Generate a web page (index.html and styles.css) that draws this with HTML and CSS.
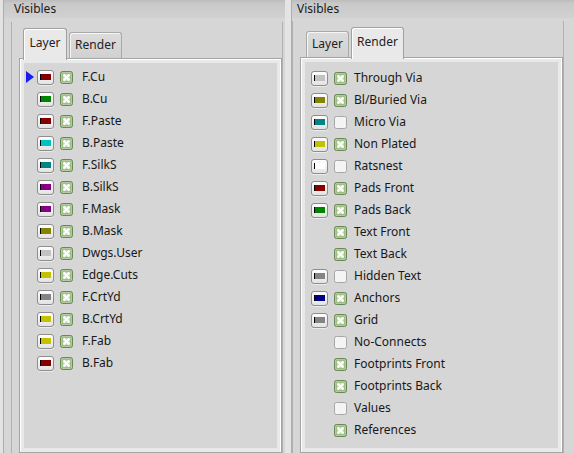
FILE: index.html
```html
<!DOCTYPE html>
<html lang="en">
<head>
<meta charset="utf-8">
<title>Visibles</title>
<link rel="stylesheet" href="styles.css">
</head>
<body>
<svg class="defs" xmlns="http://www.w3.org/2000/svg" aria-hidden="true">
  <symbol id="cb-on" viewBox="0 0 13 13">
    <rect x="0.5" y="0.5" width="12" height="12" rx="2" fill="#9ebd85" stroke="#6a8859"/>
    <rect x="1.5" y="1.5" width="10" height="10" rx="1.5" fill="none" stroke="#b2cb9d" stroke-width="1"/>
    <rect x="3" y="3" width="7" height="7" rx="1" fill="#c9d9bd"/>
    <path d="M4.2 4.2l4.6 4.6M8.8 4.2l-4.6 4.6" stroke="#ffffff" stroke-width="2" stroke-linecap="square"/>
  </symbol>
  <symbol id="cb-off" viewBox="0 0 13 13">
    <rect x="0.5" y="0.5" width="12" height="12" rx="2" fill="#f4f4f4" stroke="#a7a7a7"/>
  </symbol>
</svg>
<div class="screen">
  <div class="edge"></div>

  <section class="panel panel-left">
    <div class="header">Visibles</div>
    <div class="frame">
      <div class="tabbar">
        <div class="tab t-layer active">Layer</div>
        <div class="tab t-render">Render</div>
      </div>
      <div class="pane">
        <div class="pane-inner">
          <div class="row"><span class="marker"><svg width="8" height="12" viewBox="0 0 8 12"><polygon points="0,0 8,6 0,12" fill="#1a1af2"/></svg></span><span class="swatch"><i style="background:#840000"></i></span><svg class="cb"><use href="#cb-on"/></svg><span class="label">F.Cu</span></div>
          <div class="row"><span class="marker"></span><span class="swatch"><i style="background:#008400"></i></span><svg class="cb"><use href="#cb-on"/></svg><span class="label">B.Cu</span></div>
          <div class="row"><span class="marker"></span><span class="swatch"><i style="background:#840000"></i></span><svg class="cb"><use href="#cb-on"/></svg><span class="label">F.Paste</span></div>
          <div class="row"><span class="marker"></span><span class="swatch"><i style="background:#00c2c2"></i></span><svg class="cb"><use href="#cb-on"/></svg><span class="label">B.Paste</span></div>
          <div class="row"><span class="marker"></span><span class="swatch"><i style="background:#008484"></i></span><svg class="cb"><use href="#cb-on"/></svg><span class="label">F.SilkS</span></div>
          <div class="row"><span class="marker"></span><span class="swatch"><i style="background:#840084"></i></span><svg class="cb"><use href="#cb-on"/></svg><span class="label">B.SilkS</span></div>
          <div class="row"><span class="marker"></span><span class="swatch"><i style="background:#840084"></i></span><svg class="cb"><use href="#cb-on"/></svg><span class="label">F.Mask</span></div>
          <div class="row"><span class="marker"></span><span class="swatch"><i style="background:#848400"></i></span><svg class="cb"><use href="#cb-on"/></svg><span class="label">B.Mask</span></div>
          <div class="row"><span class="marker"></span><span class="swatch"><i style="background:#c2c2c2"></i></span><svg class="cb"><use href="#cb-on"/></svg><span class="label">Dwgs.User</span></div>
          <div class="row"><span class="marker"></span><span class="swatch"><i style="background:#c2c200"></i></span><svg class="cb"><use href="#cb-on"/></svg><span class="label">Edge.Cuts</span></div>
          <div class="row"><span class="marker"></span><span class="swatch"><i style="background:#848484"></i></span><svg class="cb"><use href="#cb-on"/></svg><span class="label">F.CrtYd</span></div>
          <div class="row"><span class="marker"></span><span class="swatch"><i style="background:#c2c200"></i></span><svg class="cb"><use href="#cb-on"/></svg><span class="label">B.CrtYd</span></div>
          <div class="row"><span class="marker"></span><span class="swatch"><i style="background:#c2c200"></i></span><svg class="cb"><use href="#cb-on"/></svg><span class="label">F.Fab</span></div>
          <div class="row"><span class="marker"></span><span class="swatch"><i style="background:#840000"></i></span><svg class="cb"><use href="#cb-on"/></svg><span class="label">B.Fab</span></div>
        </div>
      </div>
    </div>
  </section>

  <div class="splitter"></div>

  <section class="panel panel-right">
    <div class="header">Visibles</div>
    <div class="frame">
      <div class="tabbar">
        <div class="tab t-layer">Layer</div>
        <div class="tab t-render active">Render</div>
      </div>
      <div class="pane">
        <div class="pane-inner">
          <div class="row"><span class="swatch"><i style="background:#c2c2c2"></i></span><svg class="cb"><use href="#cb-on"/></svg><span class="label">Through Via</span></div>
          <div class="row"><span class="swatch"><i style="background:#848400"></i></span><svg class="cb"><use href="#cb-on"/></svg><span class="label">Bl/Buried Via</span></div>
          <div class="row"><span class="swatch"><i style="background:#008484"></i></span><svg class="cb"><use href="#cb-off"/></svg><span class="label">Micro Via</span></div>
          <div class="row"><span class="swatch"><i style="background:#c2c200"></i></span><svg class="cb"><use href="#cb-on"/></svg><span class="label">Non Plated</span></div>
          <div class="row"><span class="swatch"><i style="background:#ffffff"></i></span><svg class="cb"><use href="#cb-off"/></svg><span class="label">Ratsnest</span></div>
          <div class="row"><span class="swatch"><i style="background:#840000"></i></span><svg class="cb"><use href="#cb-on"/></svg><span class="label">Pads Front</span></div>
          <div class="row"><span class="swatch"><i style="background:#008400"></i></span><svg class="cb"><use href="#cb-on"/></svg><span class="label">Pads Back</span></div>
          <div class="row"><span class="swatch-none"></span><svg class="cb"><use href="#cb-on"/></svg><span class="label">Text Front</span></div>
          <div class="row"><span class="swatch-none"></span><svg class="cb"><use href="#cb-on"/></svg><span class="label">Text Back</span></div>
          <div class="row"><span class="swatch"><i style="background:#848484"></i></span><svg class="cb"><use href="#cb-off"/></svg><span class="label">Hidden Text</span></div>
          <div class="row"><span class="swatch"><i style="background:#000084"></i></span><svg class="cb"><use href="#cb-on"/></svg><span class="label">Anchors</span></div>
          <div class="row"><span class="swatch"><i style="background:#848484"></i></span><svg class="cb"><use href="#cb-on"/></svg><span class="label">Grid</span></div>
          <div class="row"><span class="swatch-none"></span><svg class="cb"><use href="#cb-off"/></svg><span class="label">No-Connects</span></div>
          <div class="row"><span class="swatch-none"></span><svg class="cb"><use href="#cb-on"/></svg><span class="label">Footprints Front</span></div>
          <div class="row"><span class="swatch-none"></span><svg class="cb"><use href="#cb-on"/></svg><span class="label">Footprints Back</span></div>
          <div class="row"><span class="swatch-none"></span><svg class="cb"><use href="#cb-off"/></svg><span class="label">Values</span></div>
          <div class="row"><span class="swatch-none"></span><svg class="cb"><use href="#cb-on"/></svg><span class="label">References</span></div>
        </div>
      </div>
    </div>
  </section>
</div>
</body>
</html>
```

FILE: styles.css
```css
html, body {
  margin: 0;
  padding: 0;
}

body {
  width: 574px;
  height: 453px;
  overflow: hidden;
  background: #d6d6d6;
  font-family: "Noto Sans", "Open Sans", "DejaVu Sans", sans-serif;
  font-size: 12px;
  color: #181818;
}

.defs {
  display: block;
  width: 0;
  height: 0;
  overflow: hidden;
}

.screen {
  display: flex;
  height: 453px;
  overflow: hidden;
}

.edge {
  flex: none;
  width: 3px;
  background: #e3e3e3;
}

.splitter {
  flex: none;
  width: 6px;
  background: #e4e4e4;
}

.panel {
  display: flex;
  flex-direction: column;
  border-left: 1px solid #adadad;
  background: #d6d6d6;
}

.panel-left {
  flex: none;
  width: 281px;
}

.panel-right {
  flex: 1;
  min-width: 0;
}

.header {
  flex: none;
  height: 18px;
  line-height: 18px;
  padding-left: 10px;
  background: linear-gradient(#bcbcbc, #c9c9c9 20%, #d1d1d1);
  color: #1a1a1a;
}

.panel-right .header {
  padding-left: 5px;
}

.frame {
  flex: 1;
  display: flex;
  flex-direction: column;
  margin: 4px 2px 0 7px;
  padding-left: 7px;
  border-left: 1px solid #b0b0b0;
  border-right: 1px solid #b0b0b0;
}

.panel-right .frame {
  margin: 3px 10px 0 0;
}

.tabbar {
  flex: none;
  display: flex;
  align-items: flex-end;
  padding: 6px 0 0 4px;
}

.panel-right .tabbar {
  padding-left: 6px;
}

.tab {
  box-sizing: border-box;
  flex: none;
  height: 26px;
  margin-right: 2px;
  padding-top: 4px;
  line-height: 16px;
  text-align: center;
  border: 1px solid #a9a9a9;
  border-bottom: 0;
  border-radius: 3px 3px 0 0;
  background: linear-gradient(#dcdcdc, #d1d1d1);
  box-shadow: inset 1px 1px 0 rgba(255, 255, 255, 0.75);
  color: #222;
}

.t-layer {
  width: 43px;
}

.t-render {
  width: 53px;
}

.tab.active {
  position: relative;
  z-index: 1;
  height: 32px;
  margin-bottom: -2px;
  padding-top: 6px;
  border-color: #a1a1a1;
  background: #e9e9e9;
  box-shadow: inset 1px 1px 0 #ffffff;
}

.tab.t-layer.active {
  width: 44px;
}

.pane {
  flex: 1;
  display: flex;
  flex-direction: column;
  padding: 4px;
  border: 1px solid #a4a4a4;
  background: #e9e9e9;
  box-shadow: inset 1px 1px 0 #ffffff, inset -1px 0 0 #ffffff;
}

.pane-inner {
  flex: 1;
  padding-top: 3px;
  background: #d6d6d6;
}

.panel-right .pane-inner {
  padding-top: 5px;
}

.row {
  display: flex;
  align-items: center;
  height: 22px;
  padding-left: 2px;
}

.panel-right .row {
  padding-left: 6px;
}

.marker {
  flex: none;
  display: flex;
  width: 8px;
  height: 12px;
  margin-right: 3px;
}

.swatch {
  box-sizing: border-box;
  flex: none;
  display: flex;
  align-items: center;
  justify-content: center;
  width: 17px;
  height: 15px;
  margin-right: 6px;
  border: 1px solid #8e8e8e;
  border-radius: 3px;
  background: linear-gradient(#fefefe, #e3e3e3);
  box-shadow: 0 1px 0 rgba(255, 255, 255, 0.5);
}

.swatch i {
  box-sizing: border-box;
  display: block;
  width: 11px;
  height: 6px;
  border-left: 1px solid #000;
}

.swatch-none {
  flex: none;
  width: 17px;
  height: 15px;
  margin-right: 6px;
}

.cb {
  flex: none;
  width: 13px;
  height: 13px;
  margin-right: 9px;
}

.panel-right .cb {
  margin-right: 7px;
}

.label {
  line-height: 22px;
  white-space: nowrap;
}
```
